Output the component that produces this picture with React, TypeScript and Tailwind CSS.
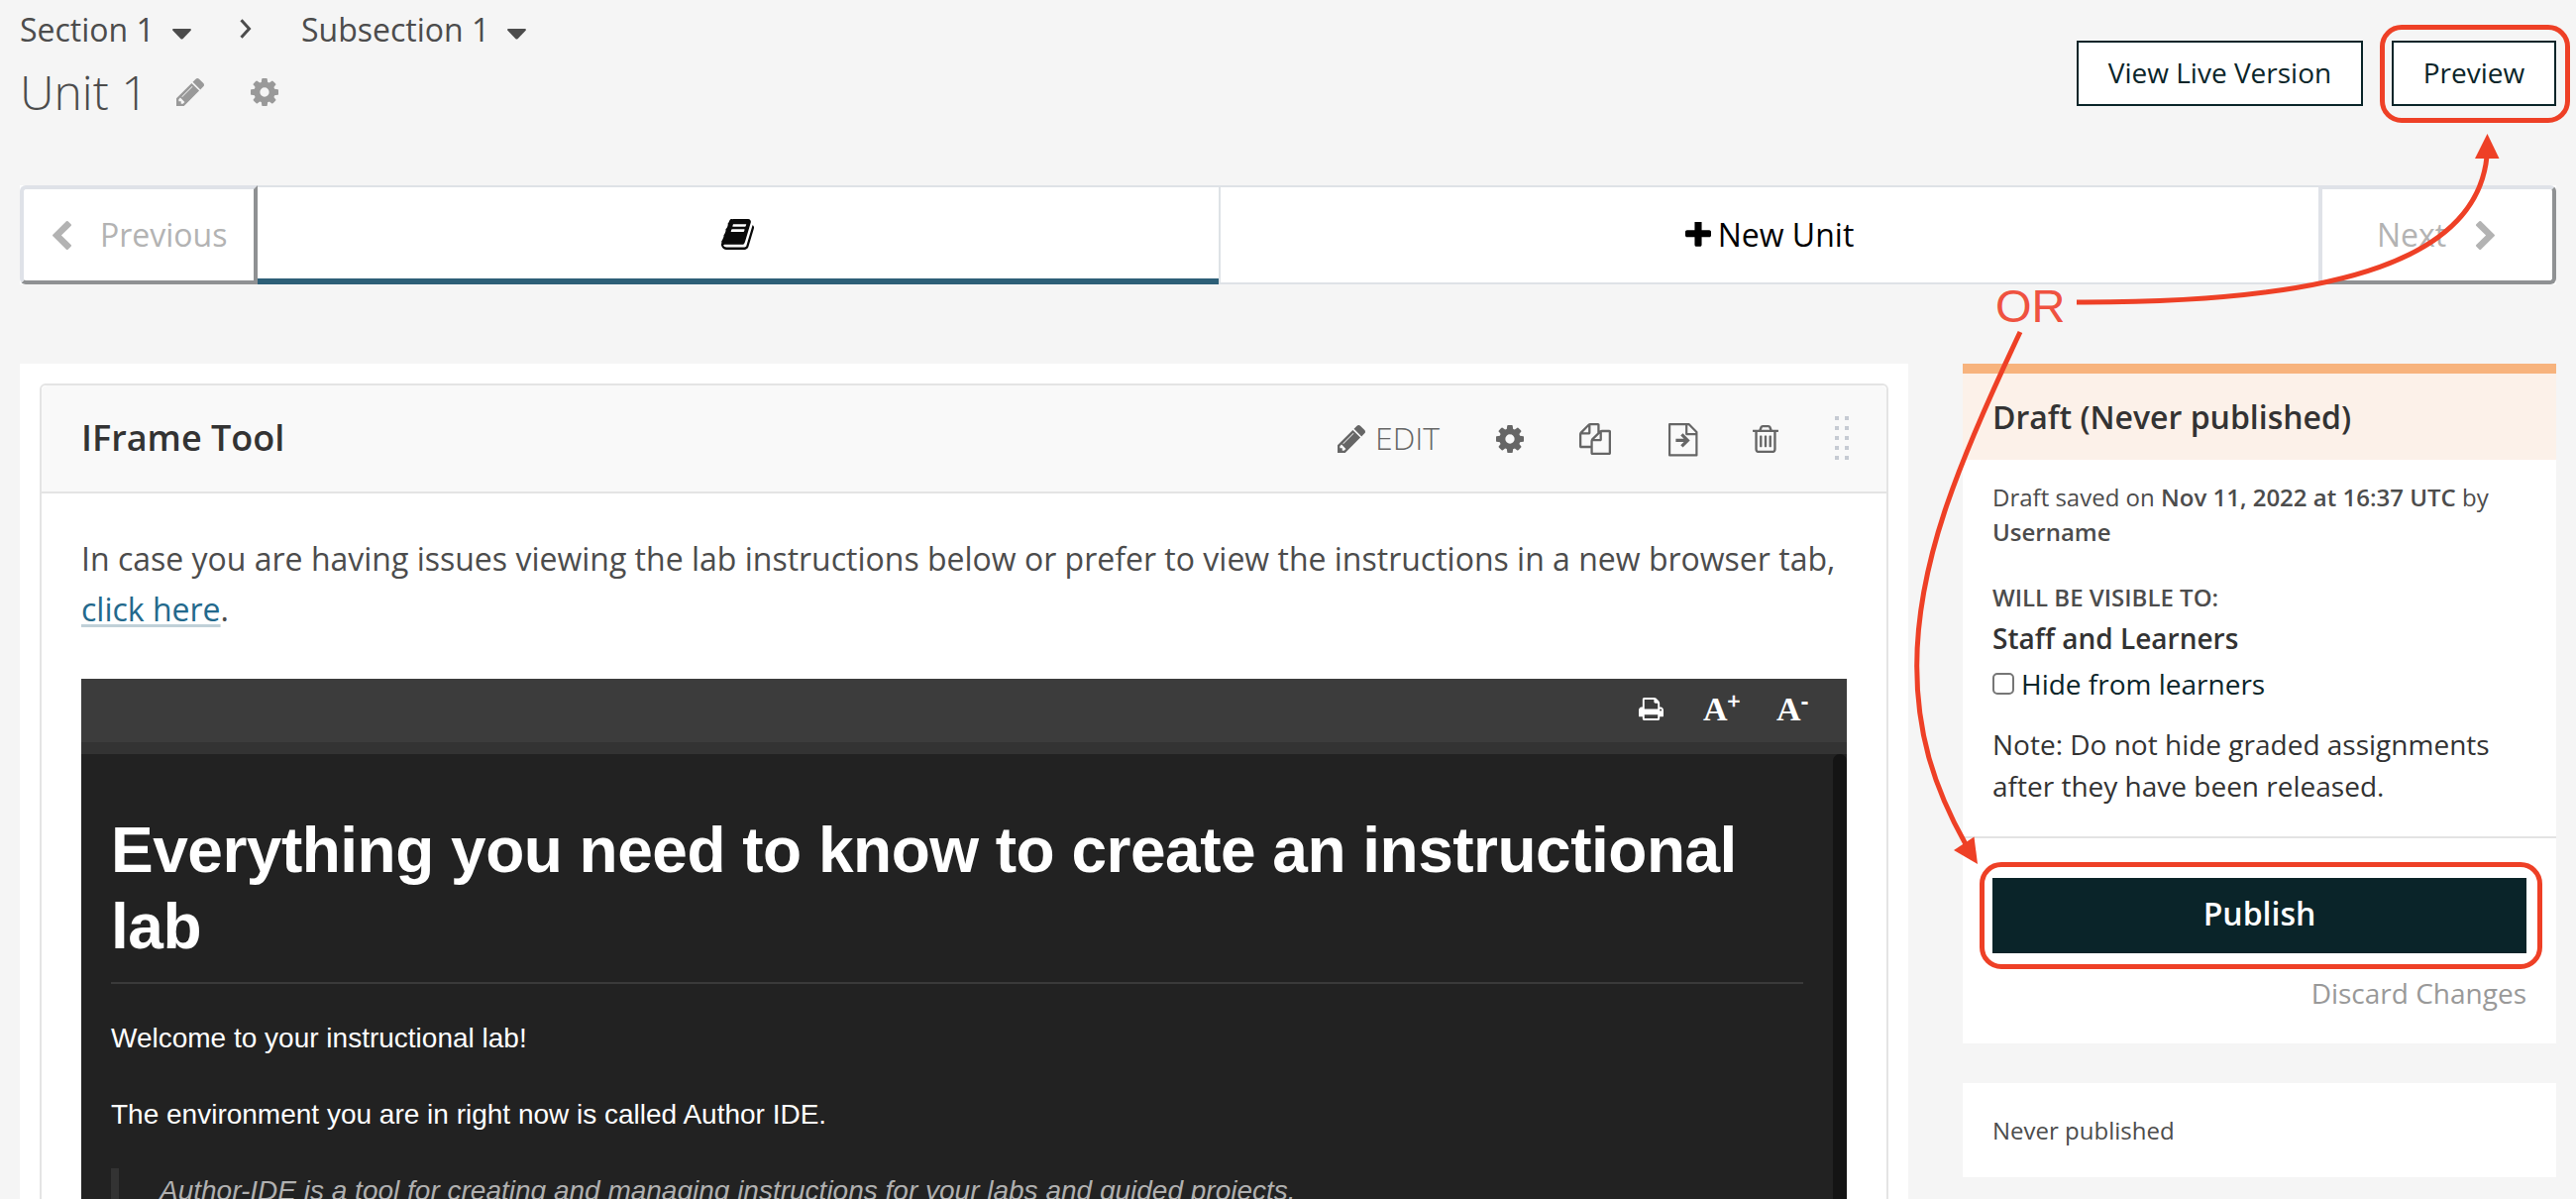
import React from "react";

type IconProps = { box: string; d: string; className: string };

const Icon = ({ box, d, className }: IconProps) => (
  <svg viewBox={box} preserveAspectRatio="none" fill="currentColor" className={`block shrink-0 ${className}`}>
    <path d={d} />
  </svg>
);

const PENCIL =
  "M491 1536l91-91-235-235-91 91v107h128v128h107zm523-928q0-22-22-22-10 0-17 7l-542 542q-7 7-7 17 0 22 22 22 10 0 17-7l542-542q7-7 7-17zm-54-192l416 416-832 832h-416v-416zm683 96q0 53-37 90l-166 166-416-416 166-165q36-38 90-38 53 0 91 38l235 234q37 39 37 91z";
const COG =
  "M1152 896q0-106-75-181t-181-75-181 75-75 181 75 181 181 75 181-75 75-181zm512-109v222q0 12-8 23t-20 13l-185 28q-19 54-39 91 35 50 107 138 10 12 10 25t-9 23q-27 37-99 108t-94 71q-12 0-26-9l-138-108q-44 23-91 38-16 136-29 186-7 28-36 28h-222q-14 0-24.5-8.5t-11.5-21.5l-28-184q-49-16-90-37l-141 107q-10 9-25 9-14 0-25-11-126-114-165-168-7-10-7-23 0-12 8-23 15-21 51-66.5t54-70.5q-27-50-41-99l-183-27q-13-2-21-12.5t-8-23.5v-222q0-12 8-23t19-13l186-28q14-46 39-92-40-57-107-138-10-12-10-24 0-10 9-23 26-36 98.5-107.5t94.5-71.5q13 0 26 10l138 107q44-23 91-38 16-136 29-186 7-28 36-28h222q14 0 24.5 8.5t11.5 21.5l28 184q49 16 90 37l142-107q9-9 24-9 13 0 25 10 129 119 165 170 7 8 7 22 0 12-8 23-15 21-51 66.5t-54 70.5q26 50 41 98l183 28q13 2 21 12.5t8 23.5z";
const TRASH =
  "M704 736v576q0 14-9 23t-23 9h-64q-14 0-23-9t-9-23v-576q0-14 9-23t23-9h64q14 0 23 9t9 23zm256 0v576q0 14-9 23t-23 9h-64q-14 0-23-9t-9-23v-576q0-14 9-23t23-9h64q14 0 23 9t9 23zm256 0v576q0 14-9 23t-23 9h-64q-14 0-23-9t-9-23v-576q0-14 9-23t23-9h64q14 0 23 9t9 23zm128 724v-948h-896v948q0 22 7 40.5t14.5 27 10.5 8.5h832q3 0 10.5-8.5t14.5-27 7-40.5zm-672-1076h448l-48-117q-7-9-17-11h-317q-10 2-17 11zm928 32v64q0 14-9 23t-23 9h-96v948q0 83-47 143.5t-113 60.5h-832q-66 0-113-58.5t-47-141.5v-952h-96q-14 0-23-9t-9-23v-64q0-14 9-23t23-9h309l70-167q15-37 54-63t79-26h320q40 0 79 26t54 63l70 167h309q14 0 23 9t9 23z";
const COPY =
  "M1696 384q40 0 68 28t28 68v1216q0 40-28 68t-68 28h-960q-40 0-68-28t-28-68v-288h-544q-40 0-68-28t-28-68v-672q0-40 20-88t48-76l408-408q28-28 76-48t88-20h416q40 0 68 28t28 68v328q68-40 128-40h416zm-544 213l-299 299h299v-299zm-640-384l-299 299h299v-299zm196 647l316-316v-416h-384v416q0 40-28 68t-68 28h-416v640h512v-256q0-40 20-88t48-76zm956 804v-1152h-384v416q0 40-28 68t-68 28h-416v640h896z";
const BOOK =
  "M1703 478q40 57 18 129l-275 906q-19 64-76.5 107.5t-122.5 43.5h-923q-77 0-148.5-53.5t-99.5-131.5q-24-67-2-127 0-4 3-27t4-37q1-8-3-21.5t-3-19.5q2-11 8-21t16.5-23.5 16.5-23.5q23-38 45-91.5t30-91.5q3-10 .5-30t-.5-28q3-11 17-28t17-23q21-36 42-92t25-90q1-9-2.5-32t.5-28q4-13 22-30.5t22-22.5q19-26 42.5-84.5t27.5-96.5q1-8-3-25.5t-2-26.5q2-8 9-18t18-23 17-21q8-12 16.5-30.5t15-35 16-36 19.5-32 26.5-23.5 36-11.5 47.5 5.5l-1 3q38-9 51-9h761q74 0 114 56t18 130l-274 906q-36 119-71.5 153.5t-128.5 34.5h-869q-27 0-38 15-11 16-1 43 24 70 144 70h923q29 0 56-15.5t35-41.5l300-987q7-22 5-57 38 15 59 43zm-1064 2q-4 13 2 22.5t20 9.5h608q13 0 25.5-9.5t16.5-22.5l21-64q4-13-2-22.5t-20-9.5h-608q-13 0-25.5 9.5t-16.5 22.5zm-83 256q-4 13 2 22.5t20 9.5h608q13 0 25.5-9.5t16.5-22.5l21-64q4-13-2-22.5t-20-9.5h-608q-13 0-25.5 9.5t-16.5 22.5z";
const CHEVRON_LEFT =
  "M1427 301l-531 531 531 531q19 19 19 45t-19 45l-166 166q-19 19-45 19t-45-19l-742-742q-19-19-19-45t19-45l742-742q19-19 45-19t45 19l166 166q19 19 19 45t-19 45z";
const CHEVRON_RIGHT =
  "M1363 877l-742 742q-19 19-45 19t-45-19l-166-166q-19-19-19-45t19-45l531-531-531-531q-19-19-19-45t19-45l166-166q19-19 45-19t45 19l742 742q19 19 19 45t-19 45z";
const PLUS =
  "M1600 736v192q0 40-28 68t-68 28h-416v416q0 40-28 68t-68 28h-192q-40 0-68-28t-28-68v-416h-416q-40 0-68-28t-28-68v-192q0-40 28-68t68-28h416v-416q0-40 28-68t68-28h192q40 0 68 28t28 68v416h416q40 0 68 28t28 68z";
const PRINT =
  "M448 1536h896v-256h-896v256zm0-640h896v-384h-160q-40 0-68-28t-28-68v-160h-640v640zm1152 64q0-26-19-45t-45-19-45 19-19 45 19 45 45 19 45-19 19-45zm128 0v416q0 13-9.5 22.5t-22.5 9.5h-224v160q0 40-28 68t-68 28h-960q-40 0-68-28t-28-68v-160h-224q-13 0-22.5-9.5t-9.5-22.5v-416q0-79 56.5-135.5t135.5-56.5h64v-544q0-40 28-68t68-28h672q40 0 88 20t76 48l152 152q28 28 48 76t20 88v256h64q79 0 135.5 56.5t56.5 135.5z";

const Caret = ({ className }: { className: string }) => (
  <svg viewBox="0 0 19 11" fill="currentColor" className={`block h-[11px] w-[19px] shrink-0 ${className}`}>
    <path d="M1 0h17q1.600.500.400 2L10.700 10q-1.200 1.200-2.400 0L.600 2Q-.600.500 1 0z" />
  </svg>
);

const MoveIcon = ({ className }: { className: string }) => (
  <svg viewBox="0 0 30 34" fill="none" stroke="currentColor" strokeWidth="2.200" strokeLinejoin="round" className={`block h-[34px] w-[30px] shrink-0 ${className}`}>
    <path d="M1.100 1.100h19.400l7.900 8v23.300H1.100z" />
    <path d="M18.200 1.500v9.600h10" />
    <path d="M7.400 17.400h12M13.400 11.400l6 6-6 6" strokeWidth="3.200" strokeLinejoin="miter" />
  </svg>
);

const Breadcrumbs = () => (
  <div className="flex h-[54px] items-start text-[32px] leading-[48px] text-[#4c4c4c]">
    <span className="w-[154px]">Section 1</span>
    <Caret className="mt-[23px]" />
    <svg viewBox="0 0 12 20" fill="none" stroke="currentColor" strokeWidth="3" className="mt-[13px] ml-[49px] h-5 w-3">
      <path d="M1.500 1.300L9.500 10l-8 8.700" />
    </svg>
    <span className="ml-[50px] w-[208px]">Subsection 1</span>
    <Caret className="mt-[23px]" />
  </div>
);

const Header = () => (
  <header className="flex h-[187px] justify-between px-5">
    <div className="pt-1.5">
      <Breadcrumbs />
      <div className="flex items-start text-[#999]">
        <h1 className="w-[158px] pt-px text-[48px] leading-[64px] font-light text-[#4c4c4c]">Unit 1</h1>
        <Icon box="128 149 1515 1515" d={PENCIL} className="mt-[19px] size-7" />
        <Icon box="128 128 1536 1536" d={COG} className="mt-[19px] ml-[47px] size-7" />
      </div>
    </div>
    <div className="flex gap-[29px] pt-[41px] text-[28px] text-[#0a2529]">
      <button className="h-[66px] w-[289px] border-2 border-[#0a2529] bg-white pb-0.5">View Live Version</button>
      <button className="relative h-[66px] w-[166px] border-2 border-[#0a2529] bg-white pb-0.5">
        Preview
        <span className="absolute -top-[18px] -right-4 h-[99px] w-[192px] rounded-[22px] border-[5px] border-[#ee4026]" />
      </button>
    </div>
  </header>
);

const UnitNav = () => (
  <nav className="mx-5 flex h-[100px] bg-white text-[32px]">
    <button className="flex w-[240px] items-center rounded-l-md border-4 border-t-[#dfe2e8] border-r-[#8f9193] border-b-[#8f9193] border-l-[#dfe2e8] pl-[29px] text-[#b3b3b3]">
      <Icon box="410 26 1036 1612" d={CHEVRON_LEFT} className="h-[29px] w-[19px]" />
      <span className="ml-[29px]">Previous</span>
    </button>
    <div className="flex w-[970px] justify-center border-t-2 border-b-[6px] border-t-[#dee2e6] border-b-[#2d5f77]">
      <Icon box="64 128 1664 1536" d={BOOK} className="mt-8 mr-px h-[31px] w-[33px] text-[#0a0a0a]" />
    </div>
    <button className="flex w-[1110px] items-center justify-center border-y-2 border-l-2 border-[#dee2e6] text-black">
      <Icon box="192 192 1408 1408" d={PLUS} className="size-[26px]" />
      <span className="ml-[7px]">New Unit</span>
    </button>
    <button className="flex w-[240px] items-center rounded-r-md border-4 border-t-[#dfe2e8] border-r-[#8f9193] border-b-[#8f9193] border-l-[#dfe2e8] pl-[55px] text-[#b3b3b3]">
      <span className="w-[100px] text-left">Next</span>
      <Icon box="346 26 1036 1612" d={CHEVRON_RIGHT} className="h-[29px] w-[19px]" />
    </button>
  </nav>
);

const ComponentHeader = () => (
  <div className="flex h-[109px] items-center justify-between rounded-t-md border-b-2 border-[#e4e4e4] bg-[#f9f9f9] pr-[38px] pl-10">
    <h2 className="pb-px text-[36px] font-semibold text-[#333]">IFrame Tool</h2>
    <div className="flex items-center text-[#666]">
      <Icon box="128 149 1515 1515" d={PENCIL} className="size-7" />
      <span className="w-[132px] pb-0.5 pl-2.5 text-[32px] font-light">EDIT</span>
      <Icon box="128 128 1536 1536" d={COG} className="size-7" />
      <Icon box="0 0 1792 1792" d={COPY} className="ml-14 size-8" />
      <MoveIcon className="mt-[3px] ml-[58px]" />
      <Icon box="192 128 1408 1536" d={TRASH} className="ml-[55px] h-7 w-[26px]" />
      <div className="-mt-0.5 ml-[57px] grid grid-cols-2 gap-x-1.5 gap-y-1.5">
        {Array.from({ length: 10 }, (_, i) => (
          <span key={i} className="size-1 bg-[#c6cbd3]" />
        ))}
      </div>
    </div>
  </div>
);

const LabFrame = () => (
  <div className="mt-[45px] h-[600px] w-[1782px] bg-[#222] font-['Liberation_Sans',Arial,sans-serif] text-white">
    <div className="flex h-16 items-start bg-[#3c3c3c] pl-[1572px] font-['Liberation_Serif',serif] text-[34px] leading-[36px] font-bold">
      <Icon box="64 128 1664 1536" d={PRINT} className="mt-[19px] h-[23px] w-[25px]" />
      <span className="mt-[13px] ml-10 flex w-[74px]">
        A<span className="-mt-[8px] font-['Liberation_Sans',sans-serif] text-[22px] font-normal [-webkit-text-stroke:0.6px_white]">+</span>
      </span>
      <span className="mt-[13px] flex">
        A<span className="-mt-[8px] font-['Liberation_Sans',sans-serif] text-[24px]">-</span>
      </span>
    </div>
    <div className="h-3 bg-[#333]" />
    <div className="flex h-[524px]">
      <div className="w-[1768px] pt-[59px] pr-[30px] pl-[30px] text-[28px] leading-[42px]">
        <h1 className="border-b-2 border-[#3a3a3a] pb-[18px] text-[64px] leading-[76.5px] font-bold tracking-[-0.5px]">
          Everything you need to know to create an instructional lab
        </h1>
        <p className="mt-[34px]">Welcome to your instructional lab!</p>
        <p className="mt-[35px]">The environment you are in right now is called Author IDE.</p>
        <blockquote className="mt-[33px] h-20 border-l-8 border-[#333] pt-0.5 pl-[41px] text-[#b0b0b0] italic">
          Author-IDE is a tool for creating and managing instructions for your labs and guided projects.
        </blockquote>
      </div>
      <div className="w-3.5 rounded-t-[7px] bg-[#141414]" />
    </div>
  </div>
);

const Sidebar = () => (
  <aside className="w-[599px]">
    <section className="h-[686px] border-t-[10px] border-[#f7b37d] bg-white">
      <h3 className="flex h-[87px] items-center bg-[#fcf1e9] pl-[30px] text-[32px] font-semibold text-[#333]">Draft (Never published)</h3>
      <div className="h-[382px] border-b-2 border-[#e3e3e3] px-[30px] pt-5 text-[28px] leading-[42px] text-[#333]">
        <p className="text-[24px] leading-[35px] text-[#4c4c4c]">
          Draft saved on <b className="font-semibold">Nov 11, 2022 at 16:37 UTC</b> by
          <br />
          <b className="font-semibold">Username</b>
        </p>
        <h4 className="mt-[31px] text-[24px] leading-[36px] font-semibold text-[#4c4c4c]">WILL BE VISIBLE TO:</h4>
        <p className="mt-0.5 font-semibold">Staff and Learners</p>
        <label className="mt-1 flex text-[#0a2529]">
          <span className="mt-2.5 mr-[7px] size-[22px] rounded-[5px] border-2 border-[#767676] bg-white" />
          Hide from learners
        </label>
        <p className="mt-[19px]">Note: Do not hide graded assignments after they have been released.</p>
      </div>
      <div className="flex flex-col items-end px-[30px] pt-10">
        <button className="relative h-[76px] w-full bg-[#0a2429] pb-[5px] text-[32px] font-semibold text-white">
          Publish
          <span className="absolute -top-4 -left-[13px] h-[108px] w-[568px] rounded-[22px] border-[5px] border-[#ee4026]" />
        </button>
        <a className="mt-[19px] text-[28px] leading-[42px] text-[#999]">Discard Changes</a>
      </div>
    </section>
    <section className="mt-10 flex h-[95px] items-center bg-white pl-[30px] text-[24px] text-[#4c4c4c]">Never published</section>
  </aside>
);

const Annotations = () => (
  <>
    <span className="absolute top-[283px] left-[2014px] font-['Liberation_Sans',Arial,sans-serif] text-[47px] leading-[52px] text-[#ef5240]">OR</span>
    <svg viewBox="0 0 2600 1210" className="pointer-events-none absolute inset-0 h-[1210px] w-[2600px]" fill="none" stroke="#ee4026" strokeWidth="5">
      <path d="M2096 305C2370 306 2500 258 2510 158" />
      <path d="M2510.500 135L2522.500 160L2498 160z" fill="#ee4026" stroke="none" />
      <path d="M2039 335C1975 470 1934.700 570 1934.700 672C1934.700 740 1952 795 1984 852" />
      <path d="M1996 872L1992.500 844.500L1972 858z" fill="#ee4026" stroke="none" />
    </svg>
  </>
);

export default function App() {
  return (
    <div className="relative h-[1210px] w-[2600px] overflow-hidden bg-[#f5f5f5] font-['Open_Sans',sans-serif]">
      <Header />
      <UnitNav />
      <main className="mt-20 flex justify-between px-5">
        <div className="h-[843px] w-[1906px] bg-white p-5 pb-0">
          <div className="h-[900px] rounded-md border-2 border-[#e4e4e4]">
            <ComponentHeader />
            <div className="pt-10 pl-10">
              <p className="w-[1800px] text-[32px] leading-[51px] text-[#4c4c4c]">
                In case you are having issues viewing the lab instructions below or prefer to view the instructions in a new browser tab,
                <br />
                <a className="text-[#23698c] underline decoration-[#c0d0d8] decoration-[3px] underline-offset-[3px]">click here</a>.
              </p>
              <LabFrame />
            </div>
          </div>
        </div>
        <Sidebar />
      </main>
      <Annotations />
    </div>
  );
}
